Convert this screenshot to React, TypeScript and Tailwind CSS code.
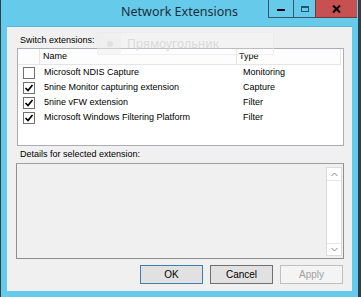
import React from "react";

const rows = [
  { name: "Microsoft NDIS Capture", type: "Monitoring", checked: false },
  { name: "5nine Monitor capturing extension", type: "Capture", checked: true },
  { name: "5nine vFW extension", type: "Filter", checked: true },
  { name: "Microsoft Windows Filtering Platform", type: "Filter", checked: true },
];

const ui = { fontFamily: '"Liberation Sans", Arial, sans-serif' };

function Check({ checked }: { checked: boolean }) {
  return (
    <div className="w-[12px] h-[12px] border border-[#707070] bg-white flex items-center justify-center">
      {checked && (
        <svg width="10" height="10" viewBox="0 0 10 10">
          <path d="M1.5 5 L4 7.5 L8.5 2" stroke="#000" strokeWidth="1.7" fill="none" />
        </svg>
      )}
    </div>
  );
}

export default function App() {
  return (
    <div className="w-[361px] h-[297px] bg-[#2f3f4a] pl-px pr-[3px] flex" style={ui}>
      <div className="flex-1 bg-[#66cbea] flex flex-col px-[6px] pb-[6px] relative">
        {/* title bar */}
        <div className="h-[26px] relative flex items-center justify-center">
          <span
            className="text-[12.5px] text-[#1c2e3b] leading-none pb-[1px]"
            style={{ fontFamily: '"Noto Sans", "Open Sans", sans-serif' }}
          >
            Network Extensions
          </span>
          <div className="absolute right-[-5px] top-0 flex h-[18px]">
            <div className="w-[25px] h-full border-l border-b border-[#31596b] flex items-center justify-center">
              <div className="w-[8px] h-[2px] bg-black mt-[3px]" />
            </div>
            <div className="w-[22px] h-full border-l border-b border-[#31596b] flex items-center justify-center">
              <div className="w-[8px] h-[6px] border border-t-2 border-[#27546a]" />
            </div>
            <div className="w-[42px] h-full bg-[#c75050] border-l border-b border-[#6e3a3a] flex items-center justify-center">
              <svg width="9" height="8" viewBox="0 0 9 8">
                <path d="M1 0.5 L8 7.5 M8 0.5 L1 7.5" stroke="#000" strokeWidth="2" />
              </svg>
            </div>
          </div>
        </div>
        {/* client */}
        <div className="flex-1 bg-[#f0f0f0] border-t border-[#5ab7d4] flex flex-col pt-[7px] pl-[10px] pr-[8px] text-[9px] text-black">
          <div className="h-[13px] leading-[13px] pl-[3px]">Switch extensions:</div>
          <div className="mt-[1px] h-[98px] border border-[#abadb3] bg-white flex flex-col">
            <div className="h-[16px] flex border-b border-[#e5e5e5] mr-[2px] bg-[#fdfdfd]">
              <div className="w-[22px] border-r border-[#e5e5e5]" />
              <div className="w-[197px] border-r border-[#e5e5e5] pl-[3px] leading-[15px]">Name</div>
              <div className="flex-1 border-r border-[#e5e5e5] pl-[2px] leading-[15px]">Type</div>
            </div>
            {rows.map((r) => (
              <div key={r.name} className="h-[15px] flex items-center">
                <div className="w-[23px] pl-[5px] flex items-center">
                  <Check checked={r.checked} />
                </div>
                <div className="w-[197px] pl-[3px] whitespace-nowrap">{r.name}</div>
                <div className="flex-1 pl-[5px]">{r.type}</div>
              </div>
            ))}
          </div>
          <div className="mt-[2px] h-[13px] leading-[13px] pl-[3px]">Details for selected extension:</div>
          <div className="mt-[2px] -ml-px h-[96px] border border-[#8f8f8f] border-t-[#a0a0a0] bg-[#f0f0f0] flex justify-end">
            <div className="w-[16px] mt-[3px] mb-[2px] mr-px bg-white border border-[#dcdcdc] flex flex-col justify-between">
              <div className="h-[13px] flex items-center justify-center border-b border-[#e6e6e6]">
                <svg width="7" height="5" viewBox="0 0 7 5">
                  <path d="M0.5 4 L3.5 1 L6.5 4" stroke="#888" strokeWidth="1" fill="none" />
                </svg>
              </div>
              <div className="h-[12px] flex items-center justify-center border-t border-[#e6e6e6]">
                <svg width="7" height="5" viewBox="0 0 7 5">
                  <path d="M0.5 1 L3.5 4 L6.5 1" stroke="#888" strokeWidth="1" fill="none" />
                </svg>
              </div>
            </div>
          </div>
          <div className="mt-[6px] flex justify-end gap-[7px] pr-px text-[10px]">
            <div className="w-[63px] h-[19px] border border-[#3c7fb1] bg-[#e1e1e1] flex items-center justify-center">OK</div>
            <div className="w-[63px] h-[19px] border border-[#707070] bg-[#e1e1e1] flex items-center justify-center">Cancel</div>
            <div className="w-[63px] h-[19px] border border-[#bfbfbf] bg-[#f4f4f4] text-[#a0a0a0] flex items-center justify-center">Apply</div>
          </div>
        </div>
        {/* ghost overlay */}
        <div className="absolute left-[96px] top-[32px] w-[177px] h-[23px] border border-[#e8e8e8]/60 bg-white/20 flex items-center">
          <div className="w-[23px] h-full bg-[#e8e8e8]/30 flex items-center justify-center">
            <div className="w-[6px] h-[6px] rounded-full bg-[#e0e0e0]" />
          </div>
          <span className="ml-[6px] text-[12px] text-[#dadada]" style={{ fontFamily: '"Noto Sans", "Open Sans", sans-serif' }}>
            Прямоугольник
          </span>
        </div>
      </div>
    </div>
  );
}
